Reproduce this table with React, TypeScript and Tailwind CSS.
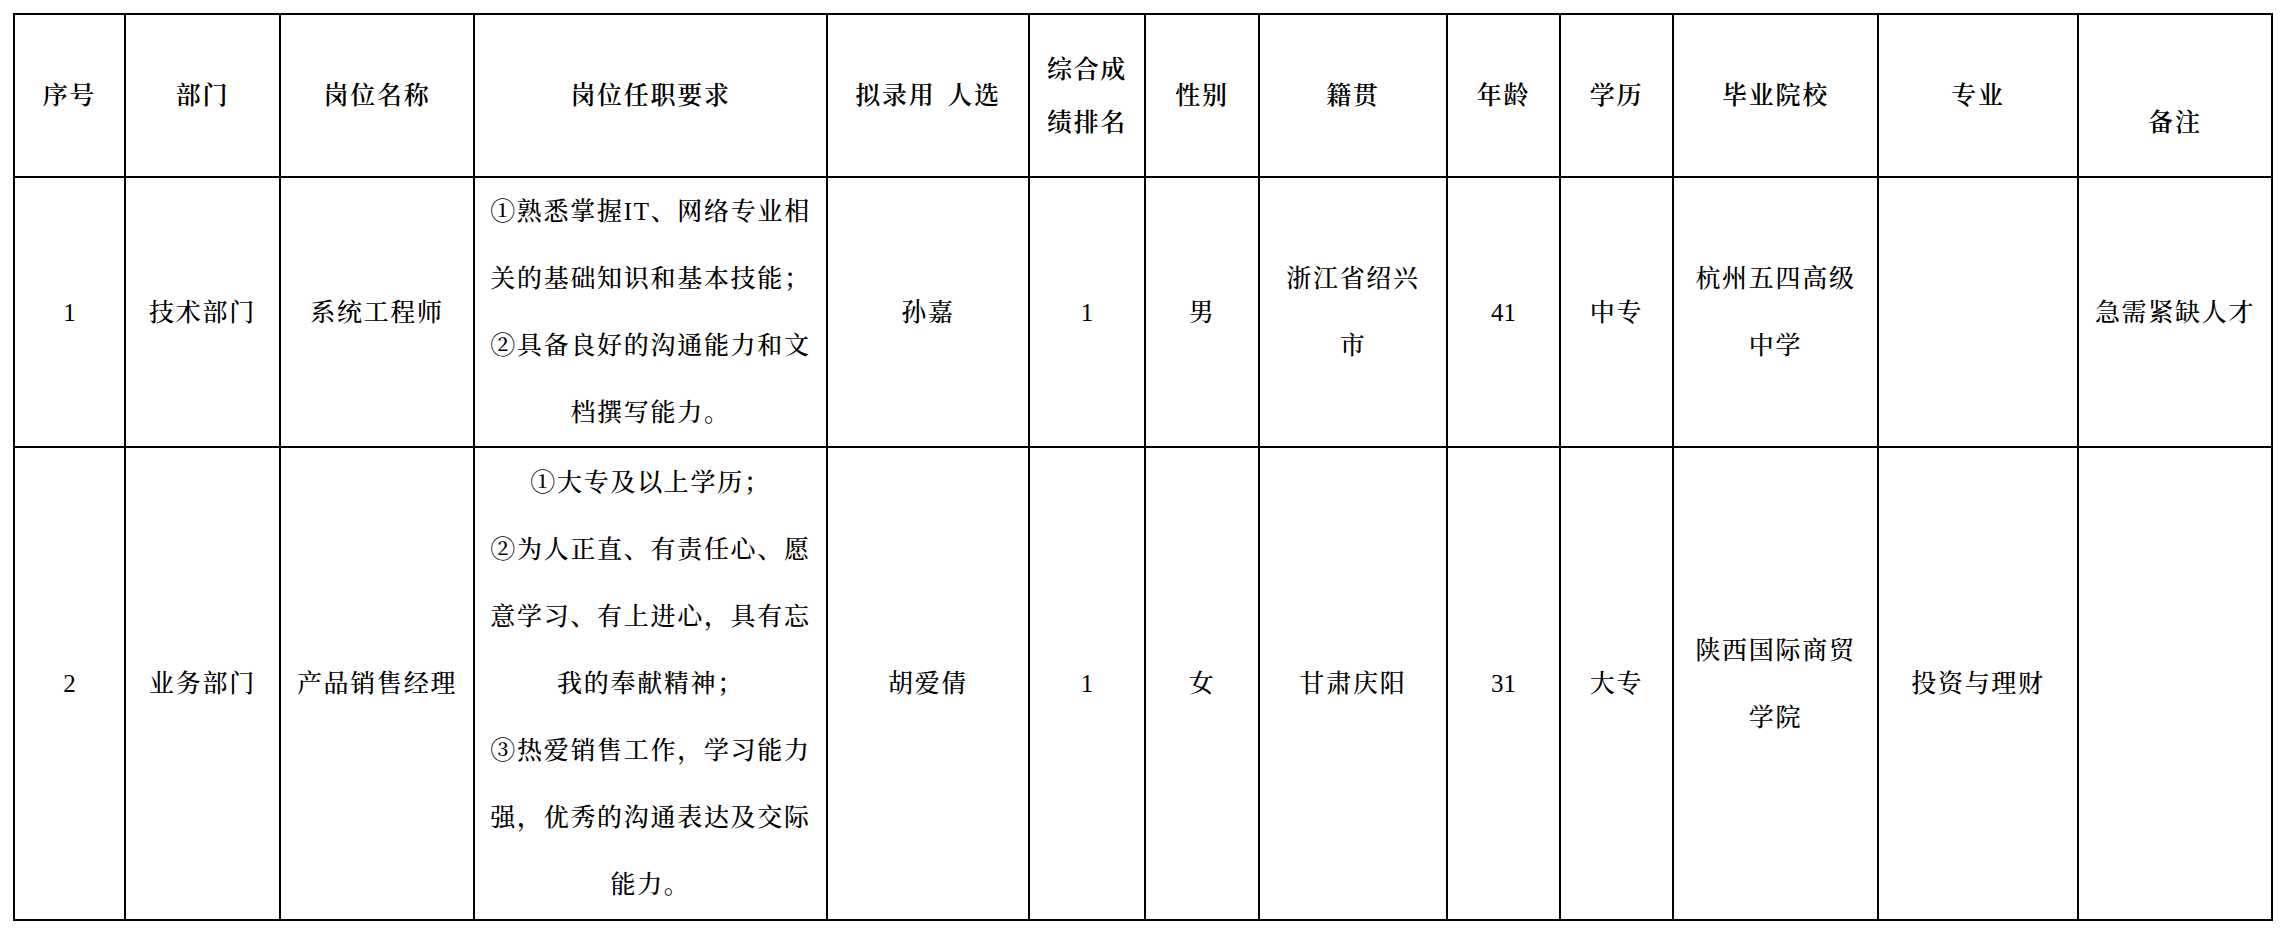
import React from 'react';

const cols = [111, 155, 194, 353, 202, 116, 114, 188, 113, 113, 205, 200, 194];

const headers: React.ReactNode[] = [
  '序号',
  '部门',
  '岗位名称',
  '岗位任职要求',
  <>拟录用<span className="inline-block w-[12px]" />人选</>,
  <>综合成<br />绩排名</>,
  '性别',
  '籍贯',
  '年龄',
  '学历',
  '毕业院校',
  '专业',
  <><span className="block h-[53px]" />备注</>,
];

// numbers get no letter spacing, like the source sheet
const num = (n: string) => <span className="tracking-normal">{n}</span>;

const rows: { h: string; cells: React.ReactNode[] }[] = [
  {
    h: 'h-[270px]',
    cells: [
      num('1'),
      '技术部门',
      '系统工程师',
      <>①熟悉掌握IT、网络专业相<br />关的基础知识和基本技能；<br />②具备良好的沟通能力和文<br />档撰写能力。</>,
      '孙嘉',
      num('1'),
      '男',
      <>浙江省绍兴<br />市</>,
      num('41'),
      '中专',
      <>杭州五四高级<br />中学</>,
      '',
      '急需紧缺人才',
    ],
  },
  {
    h: 'h-[473px]',
    cells: [
      num('2'),
      '业务部门',
      '产品销售经理',
      <>①大专及以上学历；<br />②为人正直、有责任心、愿<br />意学习、有上进心，具有忘<br />我的奉献精神；<br />③热爱销售工作，学习能力<br />强，优秀的沟通表达及交际<br />能力。</>,
      '胡爱倩',
      num('1'),
      '女',
      '甘肃庆阳',
      num('31'),
      '大专',
      <>陕西国际商贸<br />学院</>,
      '投资与理财',
      '',
    ],
  },
];

export default function App() {
  return (
    <div
      className="min-h-screen bg-white p-[13px] text-black"
      style={{ fontFamily: '"Liberation Serif", "Noto Serif CJK SC", "Noto Sans CJK SC", serif' }}
    >
      <table className="w-[2260px] table-fixed border-collapse border-2 border-black text-[25px] tracking-[1.7px]">
        <colgroup>
          {cols.map((w, i) => (
            <col key={i} style={{ width: w }} />
          ))}
        </colgroup>
        <thead>
          <tr className="h-[163px]">
            {headers.map((h, i) => (
              <th
                key={i}
                className="border-2 border-black px-1 text-center align-middle font-semibold leading-[53px] text-black"
              >
                {h}
              </th>
            ))}
          </tr>
        </thead>
        <tbody>
          {rows.map((r, ri) => (
            <tr key={ri} className={r.h}>
              {r.cells.map((c, ci) => (
                <td
                  key={ci}
                  className="border-2 border-black px-1 text-center align-middle font-medium leading-[67px] text-black"
                >
                  {c}
                </td>
              ))}
            </tr>
          ))}
        </tbody>
      </table>
    </div>
  );
}
